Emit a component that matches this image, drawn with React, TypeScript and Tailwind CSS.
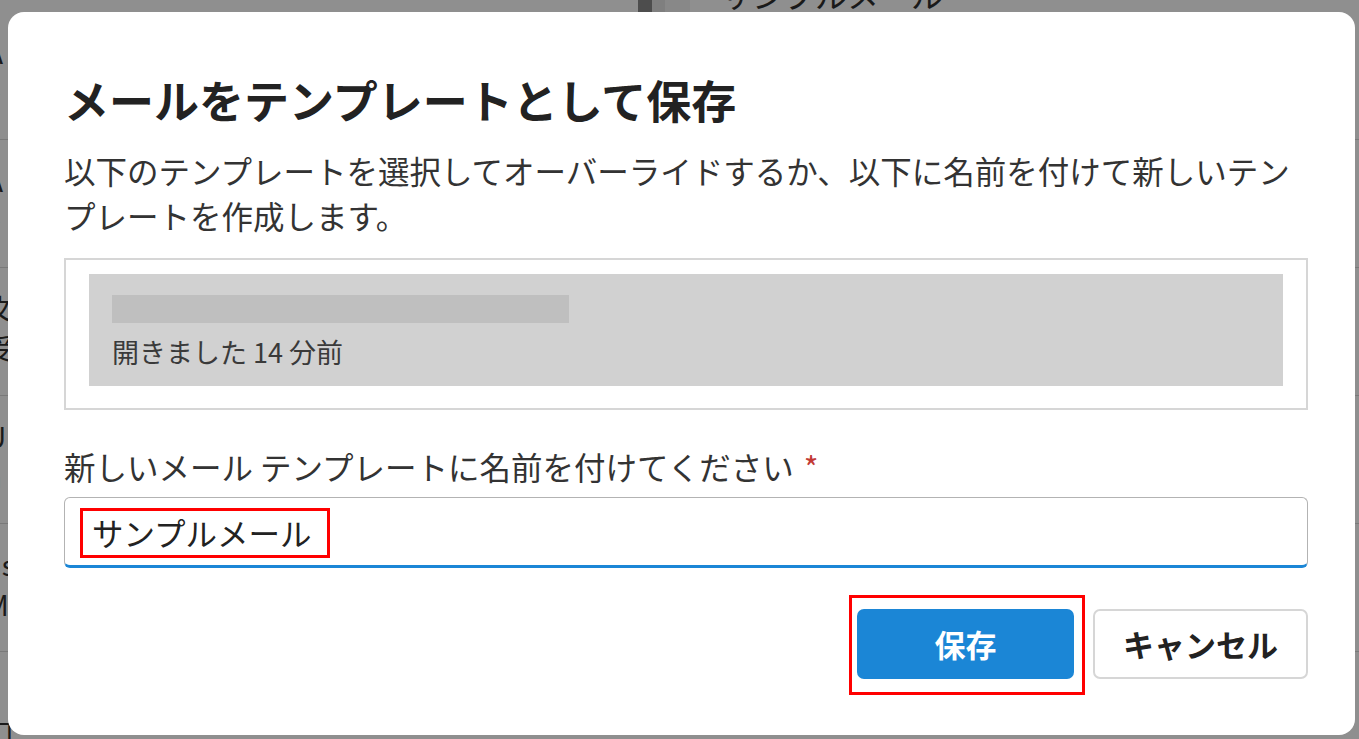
import { type ReactNode } from 'react'

const jp = { fontFamily: '"Noto Sans CJK JP", "Noto Sans", sans-serif' }

function BackgroundRow({ a, b }: { a: string; b: string }) {
  return (
    <div className="h-[128px] border-b border-[#7a7a7a] pt-[20px] text-[28px] leading-[40px] text-[#1a1a1a]">
      <div className="-ml-[14px]">{a}</div>
      <div className="-ml-[14px]">{b}</div>
    </div>
  )
}

function Highlight({ children, className }: { children: ReactNode; className: string }) {
  return <div className={`border-[3px] border-[#ff0000] ${className}`}>{children}</div>
}

export default function App() {
  return (
    <div className="relative h-[739px] w-[1359px] overflow-hidden bg-[#8f8f8f]" style={jp}>
      {/* page behind the overlay */}
      <div className="flex h-[12px] overflow-hidden">
        <div className="w-[638px]" />
        <div className="w-[14px] bg-[#4d4d4d]" />
        <div className="w-[13px] bg-[#7f7f7f]" />
        <div className="w-[25px] bg-[#888888]" />
        <div className="-mt-[24px] pl-[30px] text-[32px] leading-[36px] text-[#1a1a1a]">サンプルメール</div>
      </div>
      <div className="flex flex-col">
        <BackgroundRow a="A" b="^" />
        <BackgroundRow a="A" b="^" />
        <BackgroundRow a="文" b="受" />
        <BackgroundRow a="U" b="a" />
        <BackgroundRow a="as" b="M" />
        <BackgroundRow a="s" b="口" />
      </div>

      {/* modal */}
      <div className="absolute left-[8px] top-[12px] h-[723px] w-[1347px] rounded-[16px] bg-white pl-[56px] pr-[47px] pt-[55px]">
        <h2 className="text-[45px] font-bold leading-[66px] text-[#222222]">メールをテンプレートとして保存</h2>
        <p className="mt-[15px] text-[31.5px] leading-[45px] text-[#333333]">
          以下のテンプレートを選択してオーバーライドするか、以下に名前を付けて新しいテンプレートを作成します。
        </p>

        <div className="mt-[20px] h-[152px] border-2 border-[#d6d6d6] px-[23px] pt-[14px]">
          <div className="h-[112px] bg-[#d1d1d1] px-[23px] pt-[21px]">
            <div className="h-[28px] w-[457px] bg-[#bfbfbf]" />
            <div className="mt-[9px] text-[27px] leading-[40px] text-[#3a3a3a]">開きました 14 分前</div>
          </div>
        </div>

        <label className="mt-[36px] block text-[31.5px] leading-[40px] text-[#333333]">
          新しいメール テンプレートに名前を付けてください
          <span className="ml-[10px] text-[#c23934]">*</span>
        </label>

        <div className="mt-[11px] h-[71px] rounded-[6px] border-[1.5px] border-b-[3px] border-[#b3b3b3] border-b-[#1b86d6] pl-[15px] pt-[10px]">
          <Highlight className="inline-block h-[50px] w-[250px] pl-[9px]">
            <span className="text-[31.5px] leading-[42px] text-[#222222]">サンプルメール</span>
          </Highlight>
        </div>

        <div className="mt-[27px] flex items-start justify-end gap-[8px]">
          <Highlight className="pb-[13px] pl-[5px] pr-[8px] pt-[11px]">
            <button className="h-[70px] w-[217px] rounded-[7px] bg-[#1b86d6] text-[31px] font-bold text-white">
              保存
            </button>
          </Highlight>
          <button className="mt-[14px] h-[70px] w-[215px] rounded-[7px] border-2 border-[#d6d6d6] bg-white text-[31px] font-bold text-[#222222]">
            キャンセル
          </button>
        </div>
      </div>
    </div>
  )
}
